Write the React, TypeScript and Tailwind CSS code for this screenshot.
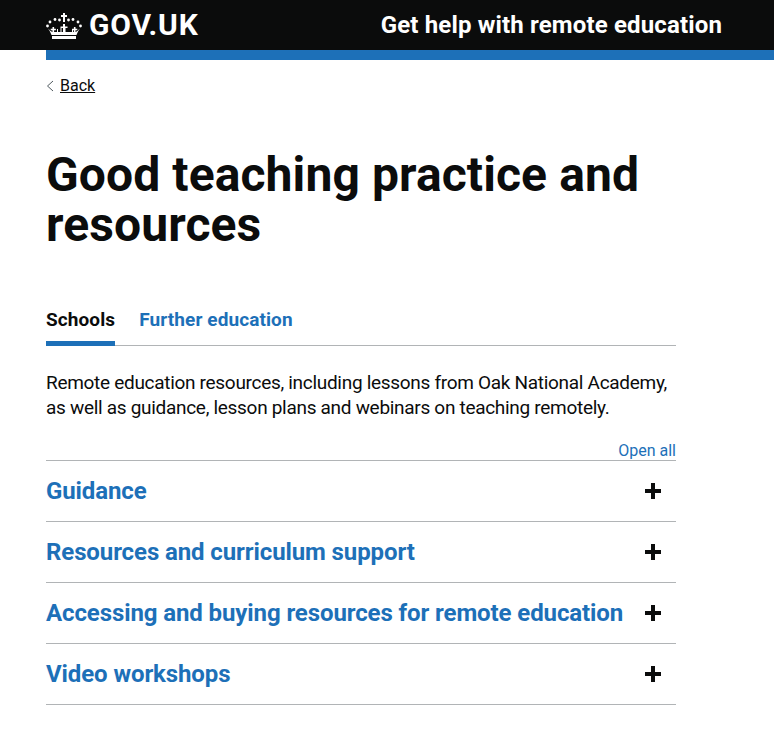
const font = "font-['Roboto',sans-serif]";

function Crown() {
  return (
    <svg width="36" height="26" viewBox="0 0 36 26" fill="#fff" className="mr-[7px] mt-[1px]">
      <rect x="17" y="0" width="2" height="9" />
      <rect x="15" y="2" width="6" height="2" />
      <circle cx="1.500" cy="13" r="1.400" />
      <circle cx="4" cy="9" r="1.400" />
      <circle cx="9" cy="6.500" r="1.400" />
      <circle cx="13.500" cy="7" r="1.400" />
      <circle cx="22.500" cy="7" r="1.400" />
      <circle cx="27" cy="6.500" r="1.400" />
      <circle cx="32" cy="9" r="1.400" />
      <circle cx="34.500" cy="13" r="1.400" />
      <path d="M2 15.500c1.500 2 2.500 4 3.500 6.500h25c1-2.500 2-4.500 3.500-6.500-1.500 1.500-3 3-4.500 3.500h-2.500V16h-1v3h-6.500v-4h-1v4h-3v-4h-1v4H12v-3h-1v3H6.500C5 18.500 3.500 17 2 15.500z" />
      <path d="M17 11h2v2.500h2.500v1.500H19v4h-2v-4h-2.500v-1.500H17zM6.500 14h1.600v1.800h1.800v1.400H8.100V20H6.500v-2.800H4.700v-1.400h1.800zM27.900 14h1.600v1.800h1.800v1.400h-1.800V20h-1.600v-2.800h-1.800v-1.400h1.800z" />
      <rect x="6" y="23" width="24" height="3" />
    </svg>
  );
}

const sections = [
  "Guidance",
  "Resources and curriculum support",
  "Accessing and buying resources for remote education",
  "Video workshops",
];

function Row({ title }: { title: string }) {
  return (
    <div className="flex items-center justify-between h-[61px] border-b border-[#b1b4b6] pr-[15px]">
      <a className="text-[24px] font-bold text-[#1d70b8] leading-[30px] tracking-[-0.1px]">{title}</a>
      <span className="relative block w-4 h-4">
        <span className="absolute left-0 top-[6px] w-4 h-1 bg-[#0b0c0c]"></span>
        <span className="absolute left-[6px] top-0 w-1 h-4 bg-[#0b0c0c]"></span>
      </span>
    </div>
  );
}

export default function App() {
  return (
    <div className={`${font} min-h-[746px] bg-white text-[#0b0c0c]`}>
      <header className="h-[50px] bg-[#0b0c0c] text-white flex items-center pl-[46px] pr-[52px] justify-between">
        <div className="flex items-center">
          <Crown />
          <span className="text-[30px] font-bold leading-none tracking-[0.8px]">GOV.UK</span>
        </div>
        <span className="text-[24px] font-bold leading-none tracking-[0.15px]">Get help with remote education</span>
      </header>
      <div className="h-[10px] ml-[46px] bg-[#1d70b8]"></div>

      <main className="w-[630px] ml-[46px]">
        <div className="flex items-center mt-[16px] h-5">
          <svg width="8" height="12" viewBox="0 0 8 12" fill="none" stroke="#505a5f" className="mr-[6px]">
            <path d="M7 1 L1.500 6 L7 11" />
          </svg>
          <a className="text-[16px] leading-[20px] underline">Back</a>
        </div>

        <h1 className="mt-[54px] text-[48px] font-bold leading-[50px] tracking-[0.1px]">Good teaching practice and resources</h1>

        <div className="mt-[44px] flex border-b border-[#b1b4b6] h-[52px]">
          <div className="h-[52px] border-b-[5px] border-[#1d70b8] font-bold text-[19px] mr-[24px] tracking-[0.1px]">
            <span className="block h-[47px] leading-[52px]">Schools</span>
          </div>
          <a className="font-bold text-[19px] leading-[52px] text-[#1d70b8] tracking-[0.1px]">Further education</a>
        </div>

        <p className="mt-[24px] text-[19px] leading-[25px] tracking-[-0.3px]">
          Remote education resources, including lessons from Oak National Academy, as well as guidance, lesson plans and webinars on teaching remotely.
        </p>

        <div className="mt-[22px] text-right leading-[18px] h-[18px]">
          <a className="text-[16px] leading-[18px] text-[#1d70b8]">Open all</a>
        </div>
        <div className="border-t border-[#b1b4b6]">
          {sections.map((title) => (
            <Row key={title} title={title} />
          ))}
        </div>
      </main>
    </div>
  );
}
